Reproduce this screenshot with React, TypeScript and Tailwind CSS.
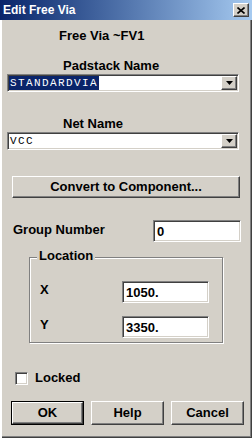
const sunken =
  "border border-t-[#808080] border-l-[#808080] border-b-white border-r-white shadow-[inset_1px_1px_0_#404040,inset_-1px_-1px_0_#d4d0c8] bg-white";
const raised =
  "border border-t-white border-l-white border-b-[#404040] border-r-[#404040] shadow-[inset_-1px_-1px_0_#808080] bg-[#d4d0c8]";

function DropArrow() {
  return (
    <div className={`${raised} w-[16px] h-[14px] flex items-center justify-center`}>
      <svg width="7" height="4" viewBox="0 0 7 4">
        <path d="M0 0h7L3.5 4z" fill="#000" />
      </svg>
    </div>
  );
}

function Combo({ value, selected }: { value: string; selected?: boolean }) {
  return (
    <div className={`${sunken} ml-[7px] w-[232px] h-[18px] flex items-stretch p-[1px]`}>
      <div className="flex-1 flex items-center">
        <span
          className={`font-['Liberation_Mono',monospace] text-[11px] leading-[14px] tracking-[1.4px] pl-[1px] pr-[1px] ${
            selected ? "bg-[#0a246a] text-white" : "text-black"
          }`}
        >
          {value}
        </span>
      </div>
      <DropArrow />
    </div>
  );
}

function Field({ value, className }: { value: string; className: string }) {
  return (
    <div className={`${sunken} ${className} h-[22px] flex items-center pl-[3px] text-[13px] font-bold leading-none`}>
      {value}
    </div>
  );
}

function Btn({ label, isDefault }: { label: string; isDefault?: boolean }) {
  return (
    <div className={`w-[73px] h-[24px] ${isDefault ? "border border-black" : ""}`}>
      <div className={`${raised} w-full h-full flex items-center justify-center text-[13px] font-bold`}>{label}</div>
    </div>
  );
}

export default function App() {
  return (
    <div className="w-[252px] h-[438px] bg-[#d4d0c8] font-['Liberation_Sans',Arial,sans-serif] text-black shadow-[inset_2px_0_0_#fff,inset_-1px_-1px_0_#404040,inset_-2px_-2px_0_#808080] overflow-hidden">
      <div className="h-[20px] bg-gradient-to-r from-[#0a246a] to-[#a6caf0] flex items-center justify-between pl-[3px] pr-[3px]">
        <span className="text-white font-bold text-[12px] leading-none">Edit Free Via</span>
        <div className={`${raised} w-[16px] h-[14px] flex items-center justify-center`}>
          <svg width="8" height="7" viewBox="0 0 8 7">
            <path d="M0.5 0.5L7.5 6.5M7.5 0.5L0.5 6.5" stroke="#000" strokeWidth="1.6" />
          </svg>
        </div>
      </div>

      <div className="mt-[9px] ml-[59px] text-[13px] font-bold leading-[14px]">Free Via ~FV1</div>

      <div className="mt-[16px] ml-[63px] text-[13px] font-bold leading-[14px]">Padstack Name</div>
      <div className="mt-[1px]">
        <Combo value="STANDARDVIA" selected />
      </div>

      <div className="mt-[25px] ml-[63px] text-[13px] font-bold leading-[14px]">Net Name</div>
      <div className="mt-[1px]">
        <Combo value="VCC" />
      </div>

      <div
        className={`${raised} mt-[26px] ml-[12px] w-[228px] h-[22px] flex items-center justify-center text-[13px] font-bold`}
      >
        Convert to Component...
      </div>

      <div className="mt-[22px] flex">
        <div className="ml-[13px] mt-[3px] w-[140px] text-[13px] font-bold leading-[14px]">Group Number</div>
        <Field value="0" className="w-[88px]" />
      </div>

      <div className="relative mt-[15px] ml-[29px] w-[194px] h-[86px] border border-[#808080] shadow-[1px_1px_0_#fff,inset_1px_1px_0_#fff]">
        <span className="absolute left-[7px] top-[-9px] px-[2px] bg-[#d4d0c8] text-[13px] font-bold leading-[14px]">
          Location
        </span>
        <div className="mt-[23px] flex">
          <div className="ml-[10px] mt-[2px] w-[82px] text-[13px] font-bold leading-[14px]">X</div>
          <Field value="1050." className="w-[87px]" />
        </div>
        <div className="mt-[13px] flex">
          <div className="ml-[10px] mt-[2px] w-[82px] text-[13px] font-bold leading-[14px]">Y</div>
          <Field value="3350." className="w-[87px]" />
        </div>
      </div>

      <div className="mt-[28px] ml-[15px] flex items-center gap-[7px]">
        <div className={`${sunken} w-[13px] h-[13px]`} />
        <span className="text-[13px] font-bold leading-[14px]">Locked</span>
      </div>

      <div className="mt-[16px] ml-[11px] flex gap-[7px]">
        <Btn label="OK" isDefault />
        <Btn label="Help" />
        <Btn label="Cancel" />
      </div>
    </div>
  );
}
